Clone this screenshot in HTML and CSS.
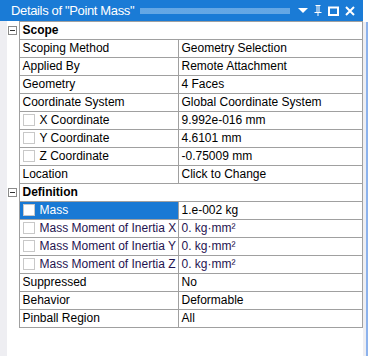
FILE: index.html
```html
<!DOCTYPE html>
<html lang="en">
<head>
    <meta charset="UTF-8">
    <title>Details of "Point Mass"</title>
    <link rel="stylesheet" href="styles.css">
</head>
<body>
    <div class="window">
        <div class="main">
            <div class="titlebar">
                <span class="title">Details of "Point Mass"</span>
                <span class="grip"></span>
                <span class="tb-icons">
                    <svg width="10" height="5" viewBox="0 0 10 5"><path d="M0 0h10L5 5z" fill="#fff"/></svg>
                    <svg width="8" height="11" viewBox="0 0 8 11"><path d="M1.5 0h5v1h-1v6h2v1h-3v3h-1V8h-3V7h2V1h-1z M3.5 1v6h1V1z" fill="#fff" fill-rule="evenodd"/></svg>
                    <svg width="11" height="10" viewBox="0 0 11 10"><rect x="1" y="1.5" width="9" height="7.5" fill="none" stroke="#fff" stroke-width="2"/></svg>
                    <svg width="10" height="10" viewBox="0 0 10 10"><path d="M1 1l8 8M9 1l-8 8" stroke="#fff" stroke-width="2"/></svg>
                </span>
            </div>
            <div class="body">
                <table class="props">
                    <colgroup>
                        <col class="c-tog">
                        <col class="c-label">
                        <col class="c-value">
                    </colgroup>
                    <tr class="group">
                        <td class="tog"><span class="minus"></span></td>
                        <td colspan="2">Scope</td>
                    </tr>
                    <tr><td class="tog"></td><td>Scoping Method</td><td>Geometry Selection</td></tr>
                    <tr><td class="tog"></td><td>Applied By</td><td>Remote Attachment</td></tr>
                    <tr><td class="tog"></td><td>Geometry</td><td>4 Faces</td></tr>
                    <tr><td class="tog"></td><td>Coordinate System</td><td>Global Coordinate System</td></tr>
                    <tr><td class="tog"></td><td><span class="chk"></span>X Coordinate</td><td>9.992e-016 mm</td></tr>
                    <tr><td class="tog"></td><td><span class="chk"></span>Y Coordinate</td><td>4.6101 mm</td></tr>
                    <tr><td class="tog"></td><td><span class="chk"></span>Z Coordinate</td><td>-0.75009 mm</td></tr>
                    <tr><td class="tog"></td><td>Location</td><td>Click to Change</td></tr>
                    <tr class="group">
                        <td class="tog"><span class="minus"></span></td>
                        <td colspan="2">Definition</td>
                    </tr>
                    <tr><td class="tog"></td><td class="sel"><span class="chk"></span>Mass</td><td>1.e-002 kg</td></tr>
                    <tr class="dim"><td class="tog"></td><td><span class="chk"></span>Mass Moment of Inertia X</td><td>0. kg·mm²</td></tr>
                    <tr class="dim"><td class="tog"></td><td><span class="chk"></span>Mass Moment of Inertia Y</td><td>0. kg·mm²</td></tr>
                    <tr class="dim"><td class="tog"></td><td><span class="chk"></span>Mass Moment of Inertia Z</td><td>0. kg·mm²</td></tr>
                    <tr><td class="tog"></td><td>Suppressed</td><td>No</td></tr>
                    <tr><td class="tog"></td><td>Behavior</td><td>Deformable</td></tr>
                    <tr><td class="tog"></td><td>Pinball Region</td><td>All</td></tr>
                </table>
            </div>
        </div>
        <div class="edge"></div>
    </div>
</body>
</html>
```

FILE: styles.css
```css
body {
    margin: 0;
    background: #fff;
    font-family: "Liberation Sans", Arial, sans-serif;
    font-size: 12px;
    color: #000;
}
.window {
    display: flex;
    width: 368px;
    height: 356px;
}
.main {
    width: 363px;
    display: flex;
    flex-direction: column;
}
.titlebar {
    height: 21px;
    background: #1a7bd6;
    display: flex;
    align-items: center;
    color: #fff;
    padding-left: 11px;
}
.title {
    font-size: 13px;
    letter-spacing: -0.35px;
    white-space: nowrap;
}
.grip {
    flex: 1;
    height: 6px;
    margin: 0 8px 0 6px;
    background-image: radial-gradient(circle, #6aaae6 0.7px, transparent 0.8px);
    background-size: 2px 2px;
}
.tb-icons {
    display: flex;
    align-items: center;
    gap: 6px;
    padding-right: 8px;
}
.body {
    flex: 1;
    background: #fff;
    border-left: 7px solid #eeeef2;
}
.props {
    border-collapse: collapse;
    width: 356px;
    table-layout: fixed;
}
.c-tog {
    width: 12px;
}
.c-label {
    width: 159px;
}
.props td {
    height: 17px;
    padding: 0 0 0 3px;
    border: 1px solid #a0a0a0;
    white-space: nowrap;
    overflow: hidden;
    line-height: 17px;
}
.props td.tog {
    padding: 0;
    border: none;
    border-right: 1px solid #a0a0a0;
}
.group td {
    font-weight: bold;
}
.minus {
    display: block;
    width: 7px;
    height: 7px;
    margin-left: 1px;
    border: 1px solid #8a8a8a;
    background: linear-gradient(#333, #333) center / 5px 1px no-repeat;
}
.chk {
    display: inline-block;
    width: 10px;
    height: 10px;
    border: 1px solid #c8c8c8;
    background: #fff;
    vertical-align: -2px;
    margin-right: 5px;
}
.props td.sel {
    background: #1979d4;
    color: #fff;
}
.dim td {
    color: #1f1450;
}
.edge {
    width: 5px;
    background: #eeeef2;
    border-right: 2px solid #8cb2ec;
    margin-top: 22px;
}
```
